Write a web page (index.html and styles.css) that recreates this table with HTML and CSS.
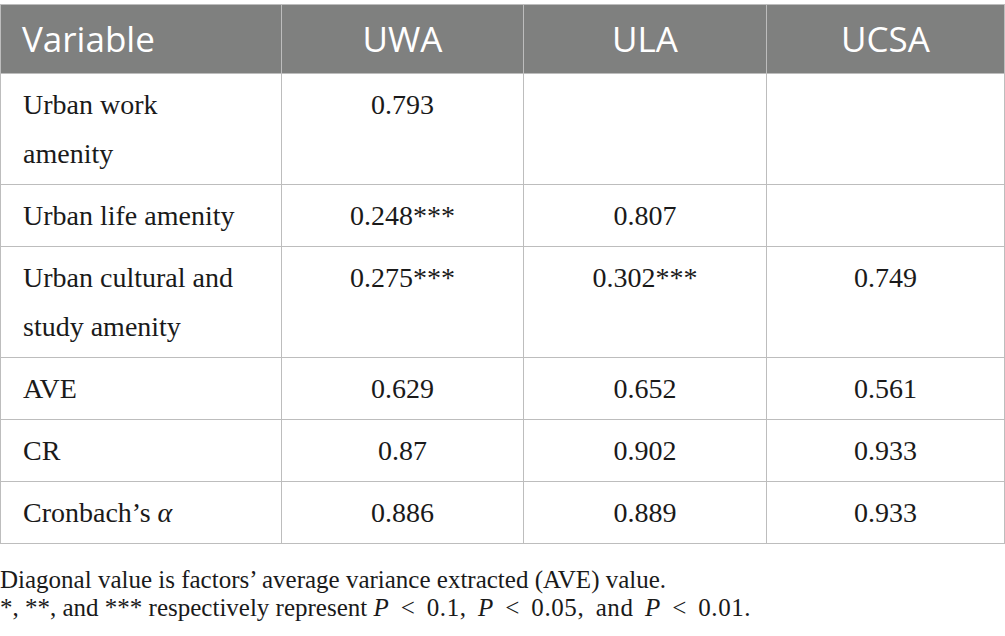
FILE: index.html
```html
<!DOCTYPE html>
<html lang="en">
<head>
<meta charset="utf-8">
<link rel="stylesheet" href="styles.css">
</head>
<body>
<div class="wrap">
<table class="data">
  <colgroup>
    <col class="c1"><col class="c2"><col class="c3"><col class="c4">
  </colgroup>
  <thead>
    <tr><th class="left">Variable</th><th>UWA</th><th>ULA</th><th>UCSA</th></tr>
  </thead>
  <tbody>
    <tr><td class="left">Urban work<br>amenity</td><td>0.793</td><td></td><td></td></tr>
    <tr><td class="left">Urban life amenity</td><td>0.248***</td><td>0.807</td><td></td></tr>
    <tr><td class="left">Urban cultural and<br>study amenity</td><td>0.275***</td><td>0.302***</td><td>0.749</td></tr>
    <tr><td class="left">AVE</td><td>0.629</td><td>0.652</td><td>0.561</td></tr>
    <tr><td class="left">CR</td><td>0.87</td><td>0.902</td><td>0.933</td></tr>
    <tr><td class="left">Cronbach’s <i>α</i></td><td>0.886</td><td>0.889</td><td>0.933</td></tr>
  </tbody>
</table>
<div class="notes">
  <p>Diagonal value is factors’ average variance extracted (AVE) value.</p>
  <p>*, **, and *** respectively represent <span class="cond"><i>P</i> &lt; 0.1, <i>P</i> &lt; 0.05, and <i>P</i> &lt; 0.01.</span></p>
</div>
</div>
</body>
</html>
```
FILE: styles.css
```css
html, body {
  margin: 0;
  padding: 0;
  background: #ffffff;
}
.wrap {
  padding-top: 4px;
  width: 1004px;
}
.data {
  width: 1004px;
  border-collapse: collapse;
  table-layout: fixed;
  font-family: "Liberation Serif", "DejaVu Serif", serif;
  font-size: 28px;
  color: #1a1a1a;
}
.c1 { width: 281px; }
.c2 { width: 242px; }
.c3 { width: 243px; }
.c4 { width: 238px; }
.data th, .data td {
  border: 1px solid #bdbdbd;
  text-align: center;
  vertical-align: top;
}
.data th {
  background: #7f807f;
  color: #ffffff;
  font-family: "Open Sans", "Lato", sans-serif;
  font-weight: 400;
  font-size: 35px;
  line-height: 40px;
  padding: 14px 21px 14px;
  height: 40px;
}
.data td {
  line-height: 49px;
  padding: 6px 22px;
}
.data .left {
  text-align: left;
}
.notes {
  margin-top: 22px;
  font-family: "Liberation Serif", "DejaVu Serif", serif;
  font-size: 25px;
  line-height: 28px;
  color: #1a1a1a;
}
.notes p {
  margin: 0;
}
.cond {
  word-spacing: 4.5px;
  letter-spacing: 0.6px;
}
```
